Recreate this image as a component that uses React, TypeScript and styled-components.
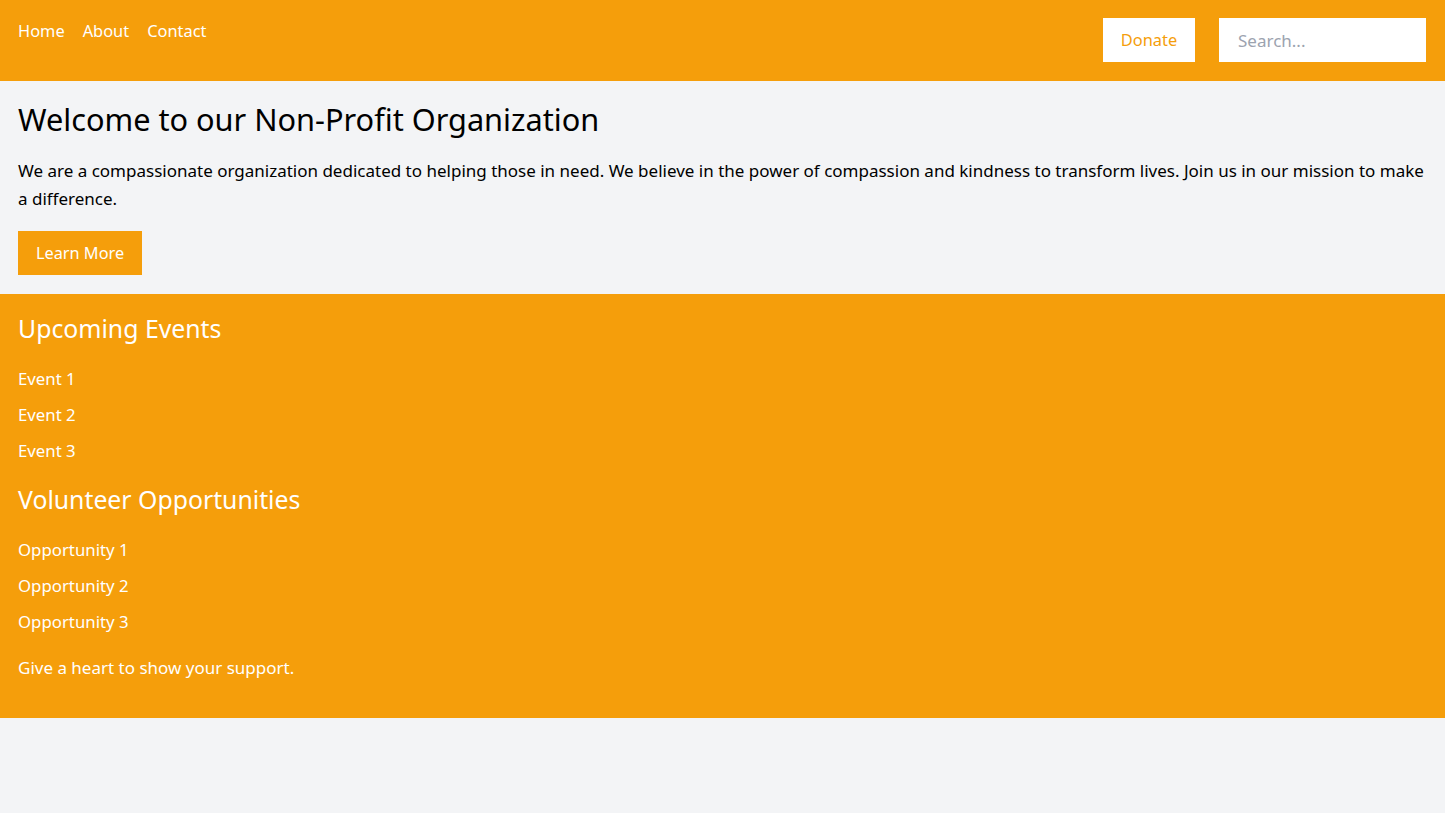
import React from "react";
import styled, { createGlobalStyle } from "styled-components";

const Global = createGlobalStyle`
  html, body { margin: 0; padding: 0; }
  body {
    background: #f3f4f6;
    font-family: "Noto Sans", "Open Sans", Arial, sans-serif;
    font-size: 17px;
    line-height: 28px;
    color: #000;
  }
  * { box-sizing: border-box; }
`;

const amber = "#f59e0b";

const Header = styled.header`
  background: ${amber};
  display: flex;
  justify-content: space-between;
  align-items: flex-start;
  padding: 18px 19px 19px 18px;
`;

const Nav = styled.nav`
  display: flex;
  gap: 18px;
`;

const NavLink = styled.a`
  color: #fff;
  text-decoration: none;
  font-size: 16.4px;
  line-height: 26px;
`;

const Actions = styled.div`
  display: flex;
  gap: 24px;
  align-items: center;
`;

const DonateButton = styled.button`
  background: #fff;
  color: ${amber};
  border: none;
  font: inherit;
  font-size: 16.4px;
  line-height: 28px;
  padding: 8px 0;
  height: 44px;
  width: 92px;
  cursor: pointer;
`;

const SearchInput = styled.input`
  width: 207px;
  height: 44px;
  border: none;
  outline: none;
  background: #fff;
  font: inherit;
  font-size: 17px;
  padding: 8px 19px;
  color: #374151;
  &::placeholder { color: #9ca3af; }
`;

const Hero = styled.section`
  padding: 18px 18px 19px;
`;

const Title = styled.h1`
  margin: 0 0 18px;
  font-size: 30.7px;
  line-height: 40px;
  font-weight: 400;
`;

const Text = styled.p<{ $light?: boolean }>`
  margin: 0 0 18px;
  font-size: 17px;
  line-height: 28px;
  color: ${(p) => (p.$light ? "#fff" : "#000")};
`;

const PrimaryButton = styled.button`
  background: ${amber};
  color: #fff;
  border: none;
  font: inherit;
  font-size: 16.3px;
  line-height: 28px;
  padding: 8px 18px;
  height: 44px;
  cursor: pointer;
`;

const Events = styled.section`
  background: ${amber};
  padding: 18px;
  color: #fff;
`;

const SectionTitle = styled.h2`
  margin: 0 0 21px;
  font-size: 24.8px;
  line-height: 32px;
  font-weight: 400;
`;

const List = styled.ul`
  list-style: none;
  margin: 0 0 18px;
  padding: 0;
`;

const Item = styled.li`
  font-size: 16.8px;
  line-height: 28px;
  & + & { margin-top: 8px; }
`;

export default function App() {
  return (
    <>
      <Global />
      <Header>
        <Nav>
          <NavLink href="#">Home</NavLink>
          <NavLink href="#">About</NavLink>
          <NavLink href="#">Contact</NavLink>
        </Nav>
        <Actions>
          <DonateButton>Donate</DonateButton>
          <SearchInput placeholder="Search..." />
        </Actions>
      </Header>
      <Hero>
        <Title>Welcome to our Non-Profit Organization</Title>
        <Text>
          We are a compassionate organization dedicated to helping those in need. We believe in the power of compassion and kindness to transform lives. Join us in our mission to make a difference.
        </Text>
        <PrimaryButton>Learn More</PrimaryButton>
      </Hero>
      <Events>
        <SectionTitle>Upcoming Events</SectionTitle>
        <List>
          <Item>Event 1</Item>
          <Item>Event 2</Item>
          <Item>Event 3</Item>
        </List>
        <SectionTitle>Volunteer Opportunities</SectionTitle>
        <List>
          <Item>Opportunity 1</Item>
          <Item>Opportunity 2</Item>
          <Item>Opportunity 3</Item>
        </List>
        <Text $light>Give a heart to show your support.</Text>
      </Events>
    </>
  );
}
